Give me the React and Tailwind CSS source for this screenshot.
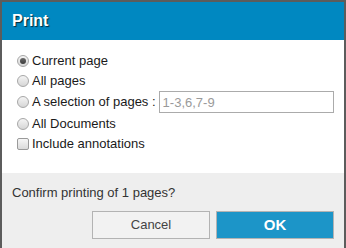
import { useState } from "react"

function Radio({ checked }) {
  return (
    <span className="w-[12px] h-[12px] rounded-full border border-[#a7a7a7] bg-linear-to-b from-[#f4f4f4] to-[#d6d6d6] flex items-center justify-center shrink-0">
      {checked && <span className="w-[6px] h-[6px] rounded-full bg-linear-to-b from-[#6a6a6a] to-[#3c3c3c]" />}
    </span>
  )
}

export default function App() {
  const [mode] = useState("current")

  const options = [
    { id: "current", label: "Current page" },
    { id: "all", label: "All pages" },
  ]

  return (
    <div className="w-[346px] h-[248px] overflow-hidden bg-white border-x-2 border-t-2 border-[#5c5c5c] font-['Liberation_Sans',Arial,sans-serif] text-[13px] text-[#1a1a1a]">
      <div className="h-[38px] bg-[#0088c1] flex items-center pl-[10px]">
        <span className="text-white font-bold text-[16px] [text-shadow:1px_1px_1px_rgba(0,0,0,0.7)]">Print</span>
      </div>

      <div className="h-[133px] pt-[11px] pl-[15px] flex flex-col">
        {options.map((o) => (
          <label key={o.id} className="h-[20px] flex items-center gap-[3px]">
            <Radio checked={mode === o.id} />
            <span>{o.label}</span>
          </label>
        ))}
        <label className="h-[22px] flex items-center gap-[3px] mb-[1px]">
          <Radio checked={mode === "selection"} />
          <span>A selection of pages :</span>
          <input
            className="w-[175px] h-[22px] border border-[#ababab] px-[3px] text-[13px] outline-none placeholder:text-[#9a9a9a]"
            placeholder="1-3,6,7-9"
          />
        </label>
        <label className="h-[20px] flex items-center gap-[3px]">
          <Radio checked={mode === "docs"} />
          <span>All Documents</span>
        </label>
        <label className="h-[20px] flex items-center gap-[3px]">
          <span className="w-[12px] h-[12px] rounded-[2px] border border-[#9a9a9a] bg-linear-to-b from-[#f6f6f6] to-[#dadada] shrink-0" />
          <span>Include annotations</span>
        </label>
      </div>

      <div className="h-[80px] bg-[#eeeeee] pt-[12px]">
        <div className="pl-[10px] leading-[16px] text-[#333]">Confirm printing of 1 pages?</div>
        <div className="mt-[10px] flex justify-end gap-[6px] pr-[10px]">
          <button className="w-[118px] h-[28px] bg-[#f2f2f2] border border-[#b3b3b3] text-[#444] text-[13px]">Cancel</button>
          <button className="w-[118px] h-[28px] bg-[#1c95c8] border border-[#b3b3b3] text-white font-bold text-[15px]">OK</button>
        </div>
      </div>
    </div>
  )
}
